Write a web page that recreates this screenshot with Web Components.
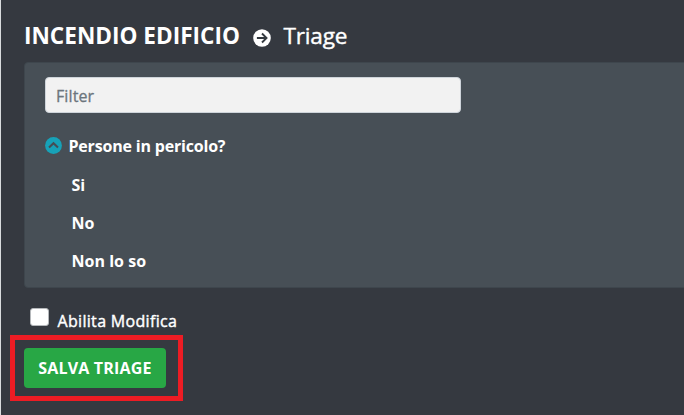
<!DOCTYPE html>
<html lang="it"><head><meta charset="utf-8"><title>Triage</title>
<style>html,body{margin:0;height:100%;overflow:hidden;background:#343a40}</style></head>
<body><triage-page></triage-page>
<script>
const define = (name, html) => customElements.define(name, class extends HTMLElement {
  constructor() {
    super();
    const t = document.createElement('template');
    t.innerHTML = html;
    this.attachShadow({mode: 'open'}).append(t.content.cloneNode(true));
  }
});

define('page-heading', `<style>
:host{display:flex;align-items:center;height:34px;font-size:22.6px;line-height:34px;white-space:nowrap}
b{width:229px;font-weight:700;letter-spacing:0}
svg{width:18px;height:18px;margin-top:3px;flex:none}
span{margin-left:12.5px;letter-spacing:-.2px;-webkit-text-stroke:.4px #fff}
</style><b><slot name="event"></slot></b>
<svg viewBox="0 0 18 18"><circle cx="9" cy="9" r="8.8" fill="#fff"/><path d="M3.9 9H13M9 4.5 13.5 9 9 13.5" fill="none" stroke="#343a40" stroke-width="1.9"/></svg>
<span><slot></slot></span>`);

define('filter-input', `<style>
:host{display:block;width:416px;height:36px}
input{box-sizing:border-box;width:100%;height:100%;margin:0;padding:2px 10px 0;border:1px solid #ced4da;border-radius:4px;background:#f2f2f2;font:16px "Open Sans",sans-serif;letter-spacing:.1px;outline:0}
input::placeholder{color:#6c757d;opacity:1;-webkit-text-stroke:.3px #6c757d}
</style><input placeholder="Filter" aria-label="Filter">`);

define('question-node', `<style>
:host{display:block;font-size:16px;font-weight:700}
div{display:flex;align-items:center;height:38px;margin-bottom:1px;line-height:38px;letter-spacing:-.19px}
svg{width:17px;height:17px;margin:0 6.5px 1px 0}
</style><div><svg viewBox="0 0 17 17"><circle cx="8.5" cy="8.5" r="8.4" fill="#17a2b8"/><path d="M4 10.4 8.5 6.2 13 10.4" fill="none" stroke="#454d55" stroke-width="2.1"/></svg><slot name="label"></slot></div><slot></slot>`);

define('answer-node', `<style>
:host{display:block;height:38px;line-height:38px;padding-left:26.5px;letter-spacing:.03px}
</style><slot></slot>`);

define('triage-panel', `<style>
:host{display:block;box-sizing:border-box;height:226px;margin-right:-4px;padding:14px 20px;border:1px solid #3e464d;border-radius:4px;background:#474f56}
question-node{margin-top:14px}
</style><filter-input></filter-input><question-node><span slot="label">Persone in pericolo?</span><answer-node>Si</answer-node><answer-node>No</answer-node><answer-node>Non lo so</answer-node></question-node>`);

define('check-option', `<style>
:host{display:flex;height:26px;padding-left:6px;font-size:16px;line-height:26px;letter-spacing:.32px;-webkit-text-stroke:.4px #fff}
i{box-sizing:border-box;width:19px;height:18px;margin:0 8.5px 0 0;border:1px solid #b5b8bb;border-radius:3px;background:#fff}
</style><i role="checkbox" aria-checked="false"></i><slot></slot>`);

define('save-button', `<style>
:host{display:block;box-sizing:border-box;width:173px;height:66px;padding:8px 9px;border:5px solid #ed1c24}
button{display:block;width:142px;height:40px;padding:0;border:0;border-radius:4px;background:#28a745;color:#fff;font:700 16px/40px "Open Sans",sans-serif;letter-spacing:.2px;white-space:nowrap}
</style><button><slot></slot></button>`);

define('triage-page', `<style>
:host{display:block;box-sizing:border-box;width:684px;height:415px;overflow:hidden;padding:19px 0 0 23px;border-left:1px solid #d9dcde;background:#353940;color:#fff;font-family:"Open Sans","Noto Sans",sans-serif}
triage-panel{margin-top:9px}
check-option{margin-top:20px}
save-button{margin:1px 0 0 -14px}
</style><page-heading><span slot="event">INCENDIO EDIFICIO</span>Triage</page-heading>
<triage-panel></triage-panel><check-option>Abilita Modifica</check-option><save-button>SALVA TRIAGE</save-button>`);
</script></body></html>
